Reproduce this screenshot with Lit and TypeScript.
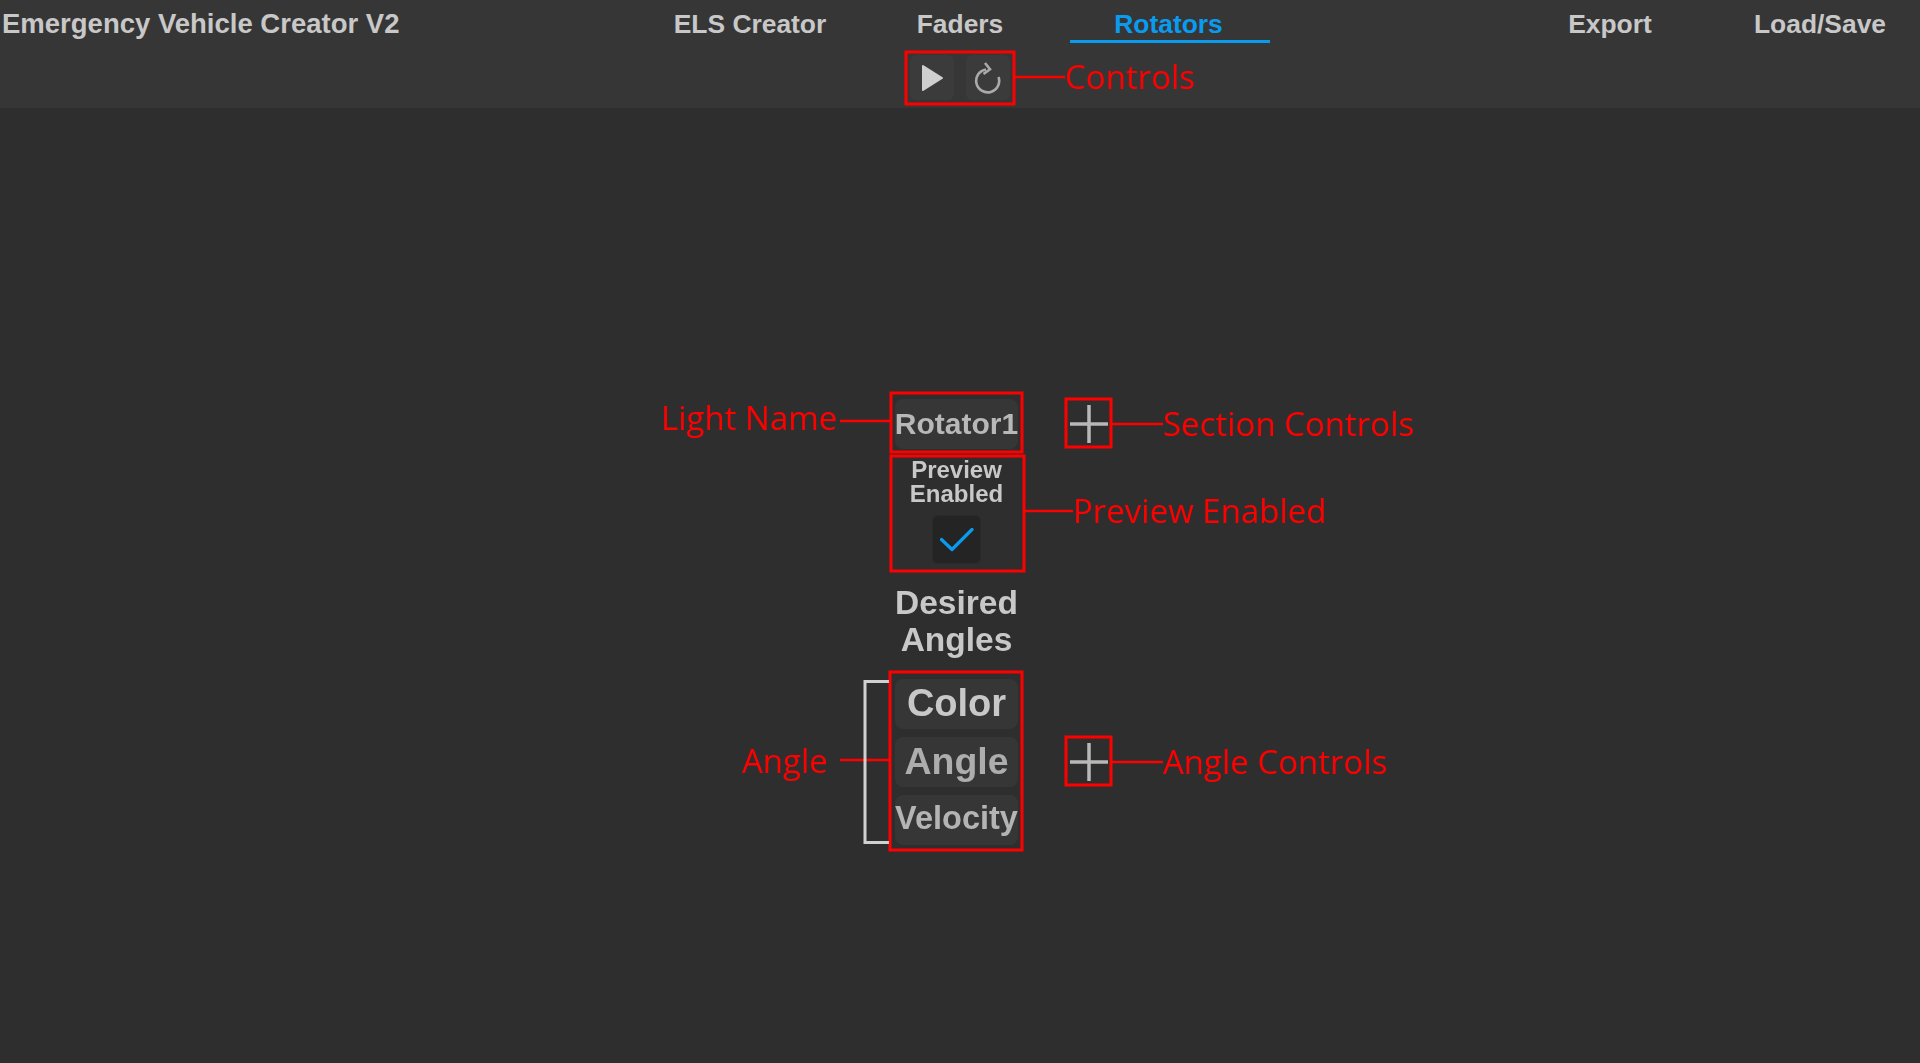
import { css, html, LitElement, svg } from "lit";
import { customElement } from "lit/decorators.js";

type Note = { text: string; x: number; y: number };
type Box = { x: number; y: number; w: number; h: number };

const notes: Note[] = [
  { text: "Controls", x: 1065, y: 77 },
  { text: "Light Name", x: 661, y: 418 },
  { text: "Section Controls", x: 1163, y: 424 },
  { text: "Preview Enabled", x: 1073, y: 511 },
  { text: "Angle", x: 742, y: 761 },
  { text: "Angle Controls", x: 1163, y: 762 },
];

const boxes: Box[] = [
  { x: 906, y: 52, w: 108, h: 52 },
  { x: 891, y: 393, w: 131, h: 59 },
  { x: 1066, y: 399, w: 45, h: 48 },
  { x: 891, y: 456, w: 133, h: 115 },
  { x: 890, y: 672, w: 132, h: 178 },
  { x: 1066, y: 737, w: 45, h: 48 },
];

const leaders = [
  [1015, 77, 1065, 77],
  [840, 421, 890, 421],
  [1112, 424, 1163, 424],
  [1025, 511, 1073, 511],
  [840, 760, 890, 760],
  [1112, 762, 1163, 762],
];

const tabs = ["ELS Creator", "Faders", "Rotators"];
const sideTabs = ["Export", "Load/Save"];

@customElement("app-root")
export class AppRoot extends LitElement {
  static styles = css`
    :host {
      display: block;
      position: relative;
      width: 100%;
      height: 1063px;
      overflow: hidden;
      background: #2e2e2e;
      font-family: "Liberation Sans", Arial, sans-serif;
      font-weight: 700;
      color: #c8c8c8;
    }

    .app {
      height: 100%;
      filter: blur(0.45px);
    }

    .header {
      height: 108px;
      background: #363636;
      box-sizing: border-box;
    }

    .top-row {
      display: grid;
      grid-template-columns: 1fr auto 1fr;
      height: 43px;
    }

    .title {
      padding-left: 2px;
      font-size: 27.5px;
      line-height: 48px;
      white-space: nowrap;
    }

    .tabs {
      display: flex;
      gap: 10px;
    }

    .tabs.side {
      justify-content: flex-end;
    }

    .tab {
      width: 200px;
      height: 43px;
      box-sizing: border-box;
      text-align: center;
      font-size: 26.4px;
      line-height: 49px;
    }

    .tab.active {
      color: #0a9bef;
      border-bottom: 3px solid #0a9bef;
      padding-right: 3px;
    }

    .controls {
      display: flex;
      justify-content: center;
      gap: 12px;
      padding-top: 12px;
      padding-right: 1px;
    }

    .ctl {
      display: flex;
      align-items: center;
      justify-content: center;
      width: 44px;
      height: 45px;
      border-radius: 6px;
      background: #3b3b3b;
    }

    .main {
      display: grid;
      grid-template-columns: 1fr 123px 1fr;
      padding-top: 291px;
      padding-right: 7px;
      text-align: center;
    }

    .field {
      grid-column: 2;
      display: flex;
      align-items: center;
      justify-content: center;
      height: 50px;
      border-radius: 8px;
      background: #363636;
      white-space: nowrap;
    }

    .name {
      font-size: 30px;
      color: #b8b8b8;
    }

    .plus {
      grid-column: 3;
      width: 47px;
      height: 50px;
      margin-left: 47px;
      display: flex;
      align-items: center;
      justify-content: center;
    }

    .plus svg {
      filter: blur(0.7px);
    }

    .preview {
      grid-column: 2;
      padding-top: 9px;
      font-size: 24px;
      line-height: 24px;
    }

    .check {
      width: 47px;
      height: 47px;
      margin: 9px auto 0;
      border: 1px solid #2a2a2a;
      border-radius: 6px;
      background: #242424;
      display: flex;
      align-items: center;
      justify-content: center;
    }

    .desired {
      grid-column: 2;
      padding-top: 20px;
      padding-bottom: 21px;
      font-size: 33.5px;
      line-height: 37px;
    }

    .angle {
      grid-column: 2;
      display: flex;
      flex-direction: column;
      gap: 8px;
    }

    .color {
      font-size: 38px;
      color: #c8c8c8;
      padding-bottom: 2px;
      box-sizing: border-box;
    }

    .value {
      font-size: 37.5px;
      color: #adadad;
      padding-bottom: 2px;
      box-sizing: border-box;
    }

    .velocity {
      font-size: 32.5px;
      color: #b4b4b4;
      padding-bottom: 4px;
      box-sizing: border-box;
    }

    .angle-row {
      grid-column: 3;
      grid-row: 4;
      align-self: start;
      margin-top: 58px;
    }

    .overlay {
      position: absolute;
      inset: 0;
      width: 1920px;
      height: 1063px;
      pointer-events: none;
    }

    .note {
      position: absolute;
      transform: translateY(-50%);
      font-family: "Open Sans", "Noto Sans", sans-serif;
      font-weight: 400;
      font-size: 33px;
      line-height: 40px;
      color: #f00;
      white-space: nowrap;
    }
  `;

  private plusIcon() {
    return html`<svg width="38" height="38" viewBox="0 0 38 38" aria-hidden="true">
      <path d="M0 19H38M19 0V38" stroke="#b8b8b8" stroke-width="3.5" fill="none" />
    </svg>`;
  }

  render() {
    return html`
      <div class="app">
        <header class="header">
          <div class="top-row">
            <div class="title">Emergency Vehicle Creator V2</div>
            <nav class="tabs">
              ${tabs.map(
                (t) => html`<div class="tab ${t === "Rotators" ? "active" : ""}">${t}</div>`,
              )}
            </nav>
            <nav class="tabs side">
              ${sideTabs.map((t) => html`<div class="tab">${t}</div>`)}
            </nav>
          </div>
          <div class="controls">
            <div class="ctl">
              <svg width="24" height="30" viewBox="0 0 24 30" aria-hidden="true">
                <path d="M3 3 22 15 3 27Z" fill="#cfcfcf" stroke="#cfcfcf" stroke-width="2" stroke-linejoin="round" />
              </svg>
            </div>
            <div class="ctl">
              <svg width="28" height="34" viewBox="0 0 28 34" style="margin-top:3px" aria-hidden="true">
                <path
                  d="M12 7.5A11.5 11.5 0 1 0 24.5 15"
                  fill="none"
                  stroke="#aaa"
                  stroke-width="2.6"
                />
                <path
                  d="M11 1 16 7.2 9.5 12"
                  fill="none"
                  stroke="#aaa"
                  stroke-width="2.6"
                />
              </svg>
            </div>
          </div>
        </header>

        <main class="main">
          <div class="field name">Rotator1</div>
          <div class="plus">${this.plusIcon()}</div>
          <div class="preview">
            Preview<br />Enabled
            <div class="check">
              <svg width="34" height="24" viewBox="0 0 34 24" aria-hidden="true">
                <path
                  d="M1.5 11.5 12 21.5 32 1.5"
                  fill="none"
                  stroke="#0a9bef"
                  stroke-width="3.2"
                  stroke-linecap="round"
                  stroke-linejoin="round"
                />
              </svg>
            </div>
          </div>
          <div class="desired">Desired<br />Angles</div>
          <div class="angle">
            <div class="field color">Color</div>
            <div class="field value">Angle</div>
            <div class="field velocity">Velocity</div>
          </div>
          <div class="plus angle-row">${this.plusIcon()}</div>
        </main>
      </div>

      <svg class="overlay" viewBox="0 0 1920 1063" aria-hidden="true">
        ${boxes.map(
          (b) =>
            svg`<rect x=${b.x} y=${b.y} width=${b.w} height=${b.h} fill="none" stroke="#f00" stroke-width="3" />`,
        )}
        ${leaders.map(
          (l) =>
            svg`<line x1=${l[0]} y1=${l[1]} x2=${l[2]} y2=${l[3]} stroke="#f00" stroke-width="2.5" />`,
        )}
        <path d="M889 681.5H865V842.5H889" fill="none" stroke="#d0d0d0" stroke-width="3" />
      </svg>
      ${notes.map(
        (n) => html`<div class="note" style="left:${n.x}px;top:${n.y}px">${n.text}</div>`,
      )}
    `;
  }
}
